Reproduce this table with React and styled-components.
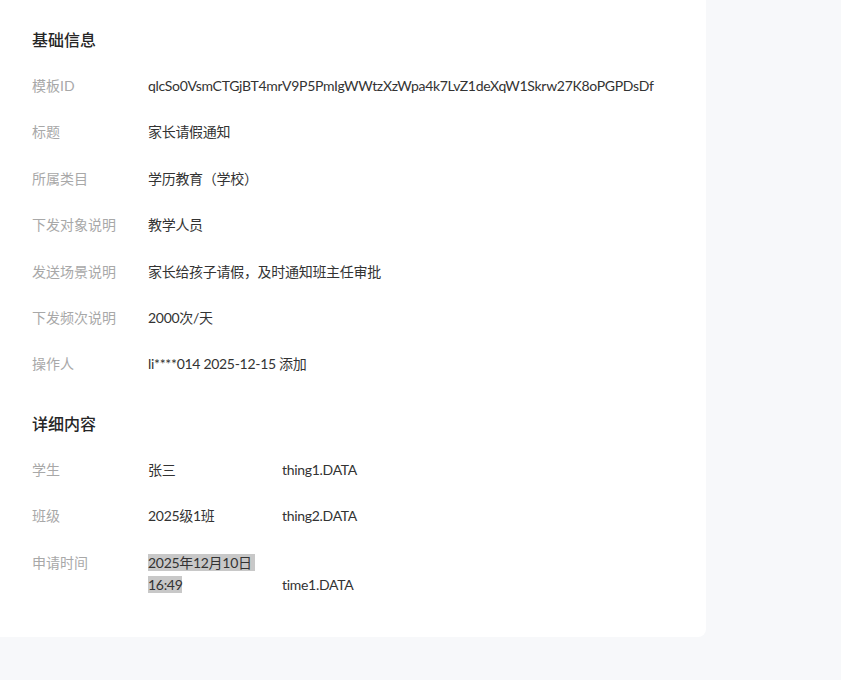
import React from "react";
import styled, { createGlobalStyle } from "styled-components";

const Global = createGlobalStyle`
  html, body { margin: 0; padding: 0; background: #f7f8fa; }
  body { font-family: Lato, "Noto Sans CJK SC", sans-serif; }
`;

const Page = styled.div`
  width: 841px;
  height: 680px;
  background: #f7f8fa;
  overflow: hidden;
`;

const Card = styled.div`
  width: 706px;
  box-sizing: border-box;
  background: #fff;
  border-radius: 0 0 8px 0;
  padding: 28px 32px 29px;
`;

const SectionTitle = styled.h3`
  margin: 0 0 11px;
  font-size: 16px;
  line-height: 24px;
  font-weight: 500;
  color: #262626;
  &:not(:first-child) { margin-top: 24px; }
`;

const Row = styled.div`
  display: flex;
  padding: 12px 0;
  font-size: 14px;
  line-height: 22.4px;
`;

const Label = styled.div`
  flex: 0 0 116px;
  color: #a8a8a8;
`;

const Value = styled.div`
  flex: 0 0 ${(p) => (p.$narrow ? "118px" : "auto")};
  padding-right: ${(p) => (p.$narrow ? "16px" : "0")};
  color: #333;
  letter-spacing: -0.3px;
  word-break: break-all;
`;

const Key = styled.div`
  color: #333;
  letter-spacing: -0.3px;
  align-self: flex-end;
`;

const Selected = styled.span`
  background: #c8c8c8;
`;

const basic = [
  ["模板ID", "qlcSo0VsmCTGjBT4mrV9P5PmIgWWtzXzWpa4k7LvZ1deXqW1Skrw27K8oPGPDsDf"],
  ["标题", "家长请假通知"],
  ["所属类目", "学历教育（学校）"],
  ["下发对象说明", "教学人员"],
  ["发送场景说明", "家长给孩子请假，及时通知班主任审批"],
  ["下发频次说明", "2000次/天"],
  ["操作人", "li****014 2025-12-15 添加"],
];

export default function App() {
  return (
    <Page>
      <Global />
      <Card>
        <SectionTitle>基础信息</SectionTitle>
        {basic.map(([k, v]) => (
          <Row key={k}>
            <Label>{k}</Label>
            <Value>{v}</Value>
          </Row>
        ))}
        <SectionTitle>详细内容</SectionTitle>
        <Row>
          <Label>学生</Label>
          <Value $narrow>张三</Value>
          <Key>thing1.DATA</Key>
        </Row>
        <Row>
          <Label>班级</Label>
          <Value $narrow>2025级1班</Value>
          <Key>thing2.DATA</Key>
        </Row>
        <Row>
          <Label>申请时间</Label>
          <Value $narrow>
            <Selected>2025年12月10日&nbsp;</Selected>
            <br />
            <Selected>16:49</Selected>
          </Value>
          <Key>time1.DATA</Key>
        </Row>
      </Card>
    </Page>
  );
}
